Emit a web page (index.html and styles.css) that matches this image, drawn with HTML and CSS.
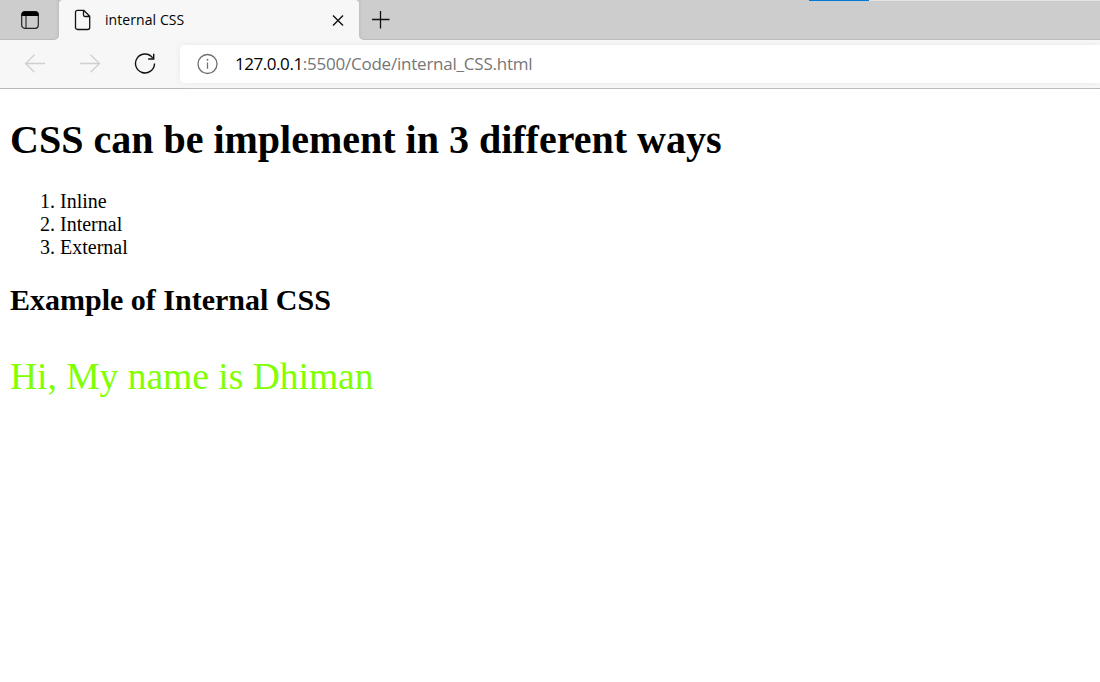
FILE: index.html
```html
<!DOCTYPE html>
<html lang="en">
<head>
<meta charset="utf-8">
<title>internal CSS</title>
<link rel="stylesheet" href="styles.css">
</head>
<body>
<header class="browser">
  <div class="tabs">
    <div class="tab-menu">
      <svg width="20" height="20" viewBox="0 0 20 20"><rect x="1.7" y="1.7" width="16.6" height="16.6" rx="3" fill="none" stroke="#222" stroke-width="1.2"/><path d="M1.5 6V4.5a3 3 0 0 1 3-3h11a3 3 0 0 1 3 3V6z" fill="#000"/><path d="M6 6v12" stroke="#222" stroke-width="1.1"/></svg>
    </div>
    <div class="tab">
      <svg class="file" width="18" height="22" viewBox="0 0 18 22" fill="none" stroke="#111" stroke-width="1.3" stroke-linejoin="round"><path d="M3.5 1.3h6.2l6 6V18.5a2 2 0 0 1-2 2H3.5a2 2 0 0 1-2-2V3.3a2 2 0 0 1 2-2zM9.5 1.5V6a1.5 1.5 0 0 0 1.5 1.5h4.5"/></svg>
      <span class="tab-title">internal CSS</span>
      <svg class="close" width="12" height="12" viewBox="0 0 12 12" stroke="#111" stroke-width="1.35"><path d="M1 1.5l10 10M11 1.5L1 11.5"/></svg>
    </div>
    <div class="tab-rest">
      <svg class="plus" width="20" height="20" viewBox="0 0 20 20" stroke="#111" stroke-width="1.3"><path d="M1 9.5h17.5M9.5 1v17.5"/></svg>
      <div class="progress"></div>
    </div>
  </div>
  <div class="toolbar">
    <svg class="back" width="22" height="20" viewBox="0 0 22 20" fill="none" stroke="#cfcfcf" stroke-width="1.3"><path d="M21 9.5H1.5M10.5 .7L1.5 9.5l9 8.8"/></svg>
    <svg class="forward" width="22" height="20" viewBox="0 0 22 20" fill="none" stroke="#cfcfcf" stroke-width="1.3"><path d="M1 9.5h19.5M11.5 .7l9 8.8-9 8.8"/></svg>
    <svg class="reload" width="22" height="22" viewBox="0 0 22 22" fill="none" stroke="#111" stroke-width="1.4"><path d="M18.7 4.9A9.5 9.5 0 1 0 20.5 10.5M19.7 .8v5.2H14.2"/></svg>
    <div class="address">
      <svg class="info" width="22" height="22" viewBox="0 0 22 22"><circle cx="11.5" cy="11" r="9.5" fill="none" stroke="#707070" stroke-width="1.3"/><path d="M11.5 9.5v6.3" stroke="#707070" stroke-width="1.3"/><circle cx="11.5" cy="6.8" r=".95" fill="#707070"/></svg>
      <span class="url"><span class="host">127.0.0.1</span>:5500/Code/internal_CSS.html</span>
    </div>
  </div>
</header>
<main class="page">
  <h1 class="title">CSS can be implement in 3 different ways</h1>
  <ol class="methods"><li>Inline</li><li>Internal</li><li>External</li></ol>
  <h2 class="subtitle">Example of Internal CSS</h2>
  <p class="greeting">Hi, My name is Dhiman</p>
</main>
</body>
</html>
```
FILE: styles.css
```css
body {
  margin: 0;
  background: #fff;
  overflow: hidden;
}
svg { display: block; flex: none; }
.browser {
  height: 88px;
  border-bottom: 1px solid #b9b9b9;
  background: #f7f7f7;
  font-family: "Open Sans", "Noto Sans", sans-serif;
}
.tabs { display: flex; height: 40px; }
.tab-menu, .tab-rest {
  box-sizing: border-box;
  background: #cdcdcd;
  border-bottom: 1px solid #bbb;
}
.tab-menu {
  width: 59px;
  padding: 10px 0 0 20px;
  border-bottom-right-radius: 5px;
  box-shadow: inset -3px 0 3px -2px #bdbdbd;
}
.tab {
  display: flex;
  align-items: center;
  box-sizing: border-box;
  width: 300px;
  padding: 0 15px;
  background: #f7f7f7;
  position: relative;
}
.tab::before, .tab::after {
  content: "";
  position: absolute;
  top: 0;
  width: 5px;
  height: 5px;
}
.tab::before { left: 0; background: radial-gradient(circle at 100% 100%, #f7f7f7 5px, #cdcdcd 5.5px); }
.tab::after { right: 0; background: radial-gradient(circle at 0 100%, #f7f7f7 5px, #cdcdcd 5.5px); }
.tab-title {
  flex: 1;
  margin-left: 13px;
  font-size: 14px;
  letter-spacing: 0.08px;
  line-height: 40px;
  white-space: nowrap;
}
.tab-rest {
  display: flex;
  flex: 1;
  justify-content: space-between;
  border-bottom-left-radius: 5px;
  box-shadow: inset 3px 0 3px -2px #bdbdbd;
}
.plus { margin: 10px 0 0 12px; }
.progress {
  width: 291px;
  height: 1px;
  background: linear-gradient(to right, #0078d7 60px, #e4e4e4 60px);
}
.toolbar {
  display: flex;
  align-items: center;
  height: 48px;
  padding-left: 24px;
}
.forward { margin-left: 33px; }
.reload { margin-left: 33px; }
.address {
  display: flex;
  align-items: center;
  flex: 1;
  height: 38px;
  margin: 0 0 1px 24px;
  padding-left: 16px;
  border-radius: 5px 0 0 5px;
  background: #fff;
  box-shadow: 0 0 6px #e9e9e9;
}
.url {
  margin-left: 17px;
  font-size: 17px;
  letter-spacing: -0.22px;
  color: #767676;
  white-space: nowrap;
}
.host {
  letter-spacing: -0.45px;
  color: #000;
}
.page {
  display: flow-root;
  padding: 0 10px;
  font-family: "Liberation Serif", "Times New Roman", serif;
  font-size: 20px;
  line-height: 23px;
}
.title {
  margin: 27px 0;
  font-size: 40px;
  line-height: 47px;
}
.methods { margin: 0; padding-left: 50px; }
.subtitle {
  margin: 24px 0;
  font-size: 30px;
  line-height: 34px;
}
.greeting {
  margin: 38px 0 0;
  font-size: 37.5px;
  line-height: 44px;
  color: #7fff00;
}
```
